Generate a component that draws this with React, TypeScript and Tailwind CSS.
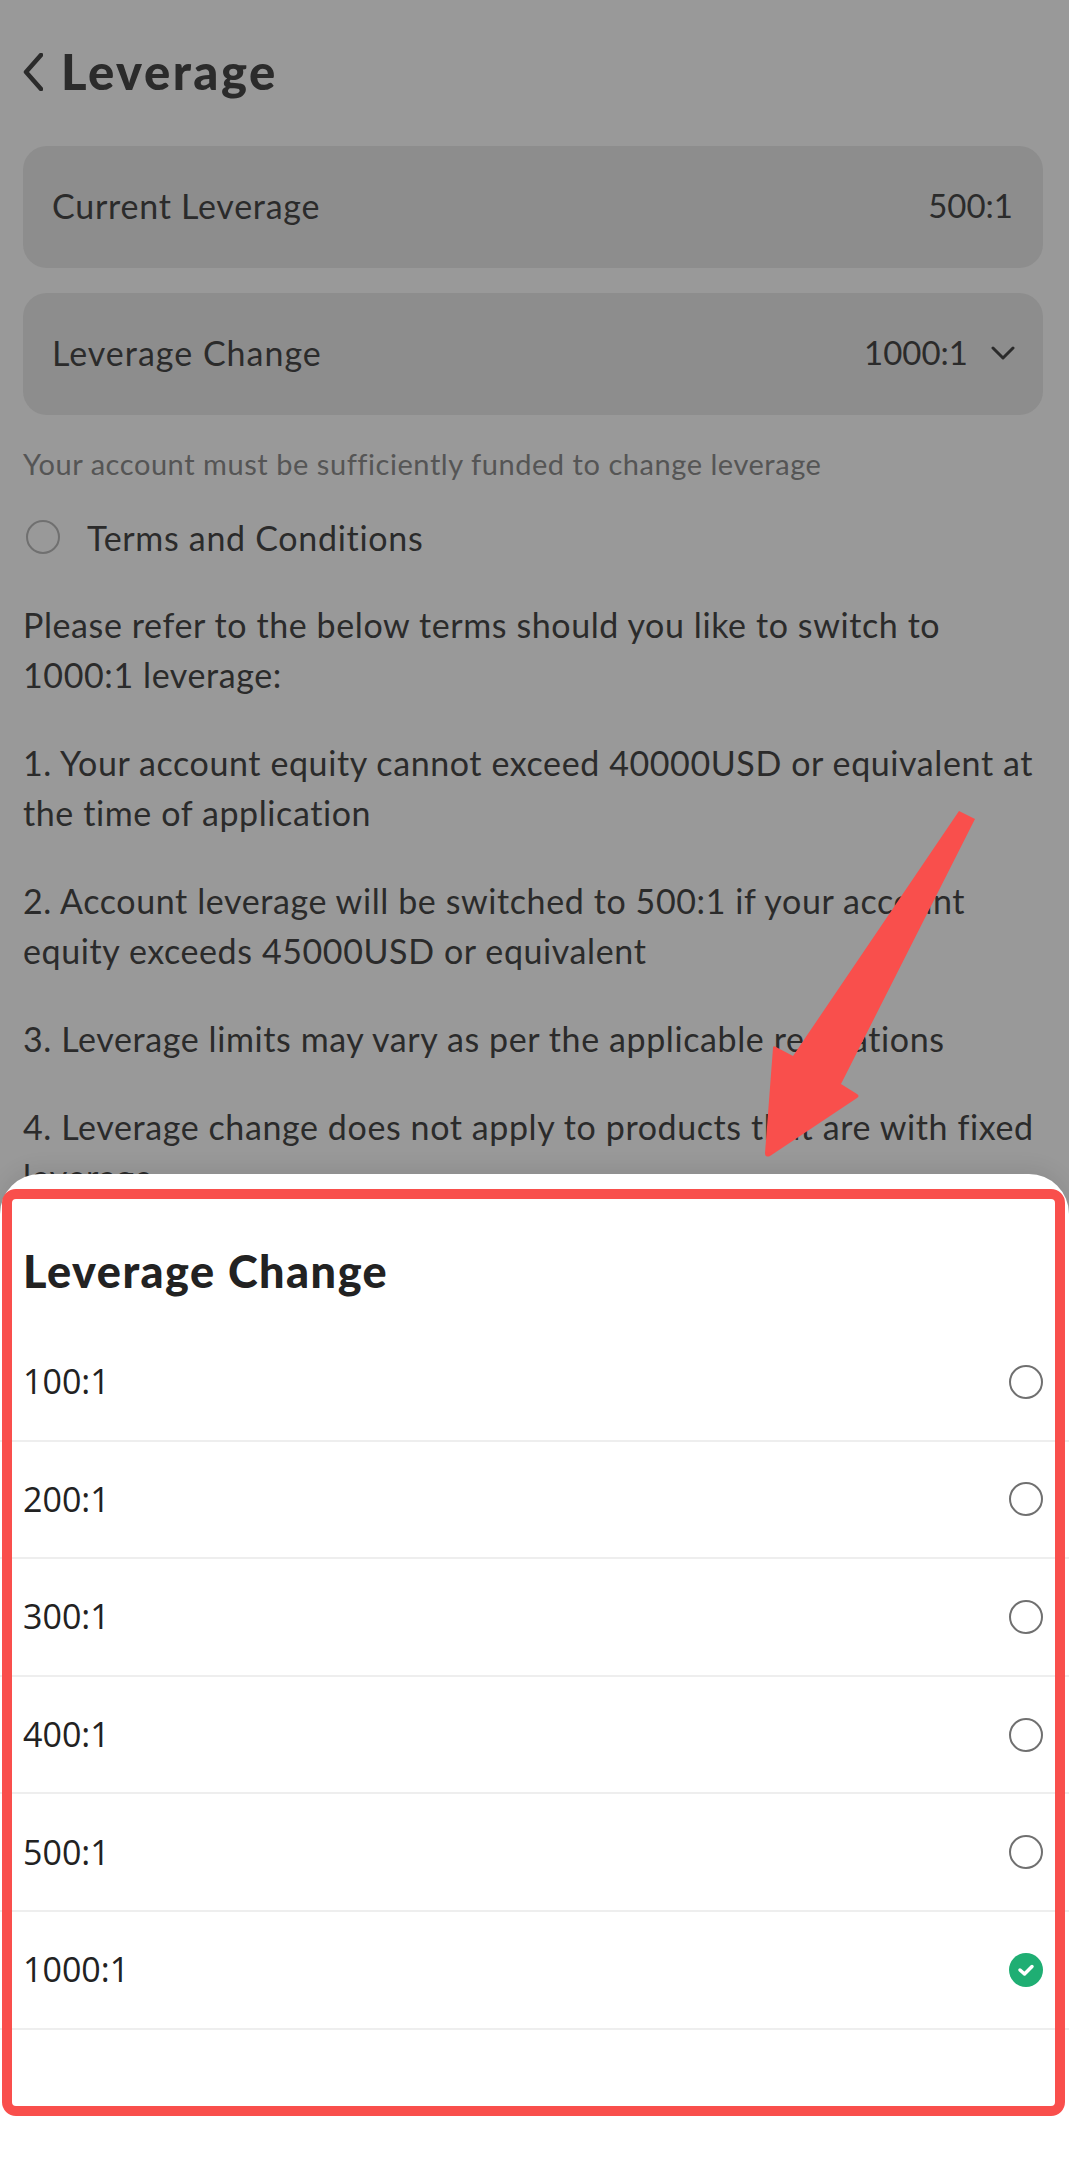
import React from 'react'

const options = ['100:1', '200:1', '300:1', '400:1', '500:1', '1000:1']

const terms = [
  'Please refer to the below terms should you like to switch to 1000:1 leverage:',
  '1. Your account equity cannot exceed 40000USD or equivalent at the time of application',
  '2. Account leverage will be switched to 500:1 if your account equity exceeds 45000USD or equivalent',
  '3. Leverage limits may vary as per the applicable regulations',
  '4. Leverage change does not apply to products that are with fixed leverage',
]

const Radio = () => <span className="block h-[34px] w-[34px] rounded-full border-2 border-[#707070]" />

const App = () => {
  return (
    <div className="relative h-[2163px] overflow-hidden bg-[#999999] text-[#2b2b2b] font-['Lato',sans-serif]">
      <div className="pr-[26px] pl-[23px]">
        <header className="flex h-[146px] items-center gap-[18px] pb-[3px]">
          <svg width="20" height="38" viewBox="0 0 20 38" fill="none" stroke="#2b2b2b" strokeWidth="4.5" strokeLinecap="round" strokeLinejoin="round">
            <path d="M18 2 3 19l15 17" />
          </svg>
          <h1 className="text-[49px] leading-none font-black tracking-[2.5px]">Leverage</h1>
        </header>

        <div className="flex h-[122px] items-center justify-between rounded-[24px] bg-[#8d8d8d] pr-[30px] pb-[3px] pl-[29px] text-[34px] tracking-[0.75px]">
          <span>Current Leverage</span>
          <span className="text-[33px] tracking-normal">500:1</span>
        </div>
        <div className="mt-[25px] flex h-[122px] items-center justify-between rounded-[24px] bg-[#8d8d8d] pr-[28px] pb-[3px] pl-[29px] text-[34px] tracking-[1px]">
          <span>Leverage Change</span>
          <span className="flex items-center gap-[23px] text-[33px] tracking-normal">
            1000:1
            <svg width="24" height="16" viewBox="0 0 24 16" fill="none" stroke="#2b2b2b" strokeWidth="3" strokeLinecap="round" strokeLinejoin="round">
              <path d="M2 3l10 10L22 3" />
            </svg>
          </span>
        </div>

        <p className="mt-[31px] text-[29px] leading-[36px] tracking-[0.55px] text-[#555555]">Your account must be sufficiently funded to change leverage</p>

        <div className="mt-[35px] flex h-[40px] items-center gap-[27px] pl-[3px] text-[34px] tracking-[0.7px]">
          <Radio />
          <span>Terms and Conditions</span>
        </div>

        <div className="mt-[43px] text-[34px] leading-[50px] tracking-[0.6px]">
          {terms.map(t => (
            <p key={t} className="mb-[38px]">{t}</p>
          ))}
        </div>
      </div>

      {/* arrow sits over the text */}
      <svg className="absolute top-0 left-0" width="1069" height="1200" viewBox="0 0 1069 1200">
        <path
          d="M959 811 975 819 841 1084 857 1094Q860 1096 857 1098L770 1156Q765 1158 765 1153L773 1048Q773 1045 776 1047L793 1056Z"
          fill="#f94f4c"
        />
      </svg>

      {/* bottom sheet */}
      <div className="absolute inset-x-0 top-[1174px] bottom-0 rounded-t-[40px] bg-white text-[#222222] shadow-[0_-6px_20px_rgba(0,0,0,0.08)]">
        <h2 className="flex h-[150px] items-center pt-[46px] pl-[23px] text-[45px] font-black tracking-[1.5px]">
          Leverage Change
        </h2>
        {options.map(o => (
          <div key={o} className="flex h-[117.6px] items-center justify-between border-b-2 border-[#eeeeee] pr-[26px] pl-[23px] font-['Open_Sans',sans-serif] text-[34px]">
            <span>{o}</span>
            {o === '1000:1' ? (
              <span className="flex h-[34px] w-[34px] items-center justify-center rounded-full bg-[#1fae73]">
                <svg width="20" height="16" viewBox="0 0 20 16" fill="none" stroke="#ffffff" strokeWidth="3.5" strokeLinecap="round" strokeLinejoin="round">
                  <path d="M4 8l4.5 4L16 4.5" />
                </svg>
              </span>
            ) : (
              <Radio />
            )}
          </div>
        ))}
      </div>

      {/* red annotation frame */}
      <div className="absolute top-[1189px] left-[2px] h-[927px] w-[1063px] rounded-[14px] border-[10px] border-[#f94f4c]" />
    </div>
  )
}

export default App
